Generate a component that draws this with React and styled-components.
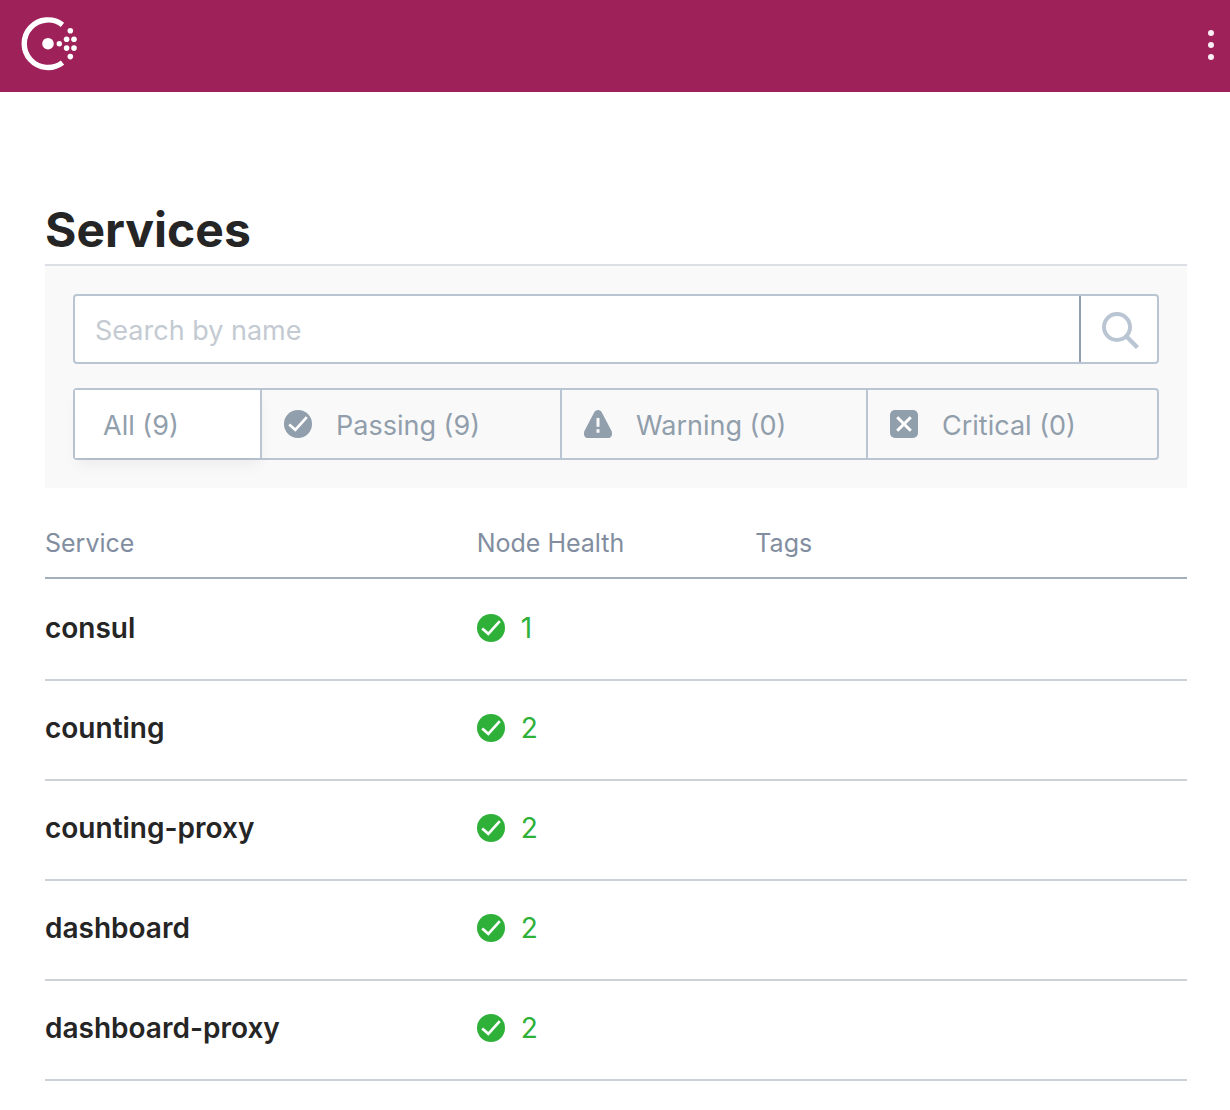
import React, { useState } from "react";
import styled, { createGlobalStyle } from "styled-components";

const GlobalStyle = createGlobalStyle`
  *, *::before, *::after { box-sizing: border-box; }
  body {
    margin: 0;
    background: #fff;
    color: #252525;
    font-family: Inter, "Liberation Sans", sans-serif;
    font-size: 28px;
    line-height: 36px;
  }
`;

const Header = styled.header`
  display: flex;
  align-items: center;
  justify-content: space-between;
  height: 92px;
  padding: 0 8px 0 20px;
  background: #9e2159;
`;

const HomeLink = styled.a`
  display: flex;
  padding-bottom: 4px;
`;

const MenuButton = styled.button`
  display: flex;
  padding: 0;
  border: 0;
  background: none;
  cursor: pointer;
`;

const Main = styled.main`
  padding: 108px 43px 0 45px;
`;

const Title = styled.h1`
  margin: 0;
  padding-bottom: 4px;
  border-bottom: 2px solid #dce0e6;
  font-size: 48px;
  line-height: 60px;
  font-weight: 700;
`;

const FilterBar = styled.form`
  display: flex;
  flex-direction: column;
  gap: 24px;
  padding: 28px;
  background: #f9f9f9;
  font-size: 27px;
`;

const SearchBox = styled.div`
  display: flex;
  height: 70px;
  border: 2px solid #bac5d3;
  border-radius: 4px;
  background: #fff;
`;

const SearchInput = styled.input`
  flex: 1;
  min-width: 0;
  padding: 4px 20px 0;
  border: 0;
  outline: 0;
  background: none;
  color: #252525;
  font: inherit;
  &::placeholder { color: #c4cad2; opacity: 1; }
`;

const SearchButton = styled.button`
  display: flex;
  align-items: center;
  justify-content: center;
  width: 78px;
  padding: 0;
  border: 0;
  border-left: 2px solid #919eae;
  background: none;
  cursor: pointer;
`;

const Filters = styled.div`
  display: grid;
  grid-template-columns: 187fr 300fr 306fr 289fr;
  height: 72px;
  border: 2px solid #bac5d3;
  border-radius: 4px;
`;

const FilterLabel = styled.label`
  display: flex;
  align-items: center;
  gap: 24px;
  padding-left: ${(p) => (p.$plain ? 28 : 22)}px;
  border-right: 2px solid #bac5d3;
  color: #919eac;
  white-space: nowrap;
  cursor: pointer;
  background: ${(p) => (p.$active ? "#fff" : "transparent")};
  box-shadow: ${(p) => (p.$active ? "0 8px 14px -2px rgba(0, 0, 0, 0.06)" : "none")};
  &:last-child { border-right: 0; }
`;

const FilterRadio = styled.input`
  position: absolute;
  width: 1px;
  height: 1px;
  margin: 0;
  opacity: 0;
`;

const FilterText = styled.span`
  padding-top: 4px;
`;

const ServiceTable = styled.table`
  width: 100%;
  margin-top: 18px;
  border-collapse: separate;
  border-spacing: 0;
  table-layout: fixed;
`;

const HeadCell = styled.th`
  width: ${(p) => p.$width || "auto"};
  height: 73px;
  padding: 2px 0 0;
  border-bottom: 2px solid #a3afbb;
  color: #828e9f;
  font-size: 25px;
  font-weight: 400;
  text-align: left;
`;

const Cell = styled.td`
  padding: 0 0 4px;
  border-bottom: 2px solid #cbd1d6;
`;

const Row = styled.tr`
  height: 100px;
  &:first-child { height: 102px; }
  &:first-child ${Cell} { border-top: 2px solid transparent; }
`;

const ServiceLink = styled.a`
  color: #252525;
  font-weight: 600;
  text-decoration: none;
`;

const Health = styled.span`
  display: flex;
  align-items: center;
  gap: 16px;
  color: #2eb039;
`;

function Logo() {
  return (
    <svg width="60" height="56" viewBox="0 0 60 56" fill="#fff" aria-hidden="true">
      <path d="M42.5 8.8A23.8 23.8 0 1 0 42.5 46.6" fill="none" stroke="#fff" strokeWidth="5.4" />
      <circle cx="28" cy="27.7" r="5.8" />
      <circle cx="39.3" cy="27.7" r="2.7" />
      <circle cx="46.6" cy="23.3" r="2.8" />
      <circle cx="54" cy="23.3" r="2.8" />
      <circle cx="46.6" cy="32.1" r="2.8" />
      <circle cx="54" cy="32.1" r="2.8" />
      <circle cx="50.3" cy="14.8" r="2.8" />
      <circle cx="50.3" cy="40.6" r="2.8" />
    </svg>
  );
}

function CheckIcon() {
  return (
    <svg width="28" height="28" viewBox="0 0 28 28" aria-hidden="true">
      <circle cx="14" cy="14" r="14" fill="currentColor" />
      <path d="M5.2 14.4L11.3 19.8L22.8 7.2" fill="none" stroke="#fff" strokeWidth="2.7" />
    </svg>
  );
}

function WarningIcon() {
  return (
    <svg width="28" height="28" viewBox="0 0 28 28" aria-hidden="true">
      <path
        d="M10.4 2.1C12 -0.7 16 -0.7 17.6 2.1L27.3 20.6C29.2 24.4 27.5 28 23.8 28H4.2C0.5 28 -1.2 24.4 0.7 20.6Z"
        fill="currentColor"
      />
      <path d="M12.5 8H15.5V16.8H12.5ZM12.5 19.2H15.5V22.8H12.5Z" fill="#f9f9f9" />
    </svg>
  );
}

function CriticalIcon() {
  return (
    <svg width="28" height="28" viewBox="0 0 28 28" aria-hidden="true">
      <rect width="28" height="28" rx="5" fill="currentColor" />
      <path d="M7.2 7.2L20.8 20.8M20.8 7.2L7.2 20.8" stroke="#fff" strokeWidth="3" />
    </svg>
  );
}

const filters = [
  { id: "all", label: "All (9)" },
  { id: "passing", label: "Passing (9)", Icon: CheckIcon },
  { id: "warning", label: "Warning (0)", Icon: WarningIcon },
  { id: "critical", label: "Critical (0)", Icon: CriticalIcon },
];

const services = [
  { name: "consul", passing: 1 },
  { name: "counting", passing: 2 },
  { name: "counting-proxy", passing: 2 },
  { name: "dashboard", passing: 2 },
  { name: "dashboard-proxy", passing: 2 },
];

export default function App() {
  const [status, setStatus] = useState("all");
  return (
    <>
      <GlobalStyle />
      <Header>
        <HomeLink href="#" aria-label="Consul">
          <Logo />
        </HomeLink>
        <MenuButton type="button" aria-label="Menu">
          <svg width="22" height="36" viewBox="0 0 22 36" fill="#f8eef3" aria-hidden="true">
            <circle cx="11" cy="5" r="3" />
            <circle cx="11" cy="17" r="3" />
            <circle cx="11" cy="29" r="3" />
          </svg>
        </MenuButton>
      </Header>
      <Main>
        <Title>Services</Title>
        <FilterBar onSubmit={(e) => e.preventDefault()}>
          <SearchBox>
            <SearchInput type="text" aria-label="Search by name" placeholder="Search by name" />
            <SearchButton type="submit" aria-label="Search">
              <svg width="40" height="40" viewBox="0 0 40 40" fill="none" stroke="#bac5d3" strokeWidth="4" aria-hidden="true">
                <circle cx="18" cy="18" r="13" />
                <path d="M27 27L38.5 38.5" strokeWidth="4.4" />
              </svg>
            </SearchButton>
          </SearchBox>
          <Filters role="radiogroup" aria-label="Health status">
            {filters.map(({ id, label, Icon }) => (
              <FilterLabel key={id} $active={status === id} $plain={!Icon}>
                <FilterRadio
                  type="radio"
                  name="status"
                  checked={status === id}
                  onChange={() => setStatus(id)}
                />
                {Icon && <Icon />}
                <FilterText>{label}</FilterText>
              </FilterLabel>
            ))}
          </Filters>
        </FilterBar>
        <ServiceTable>
          <thead>
            <tr>
              <HeadCell $width="37.8%">Service</HeadCell>
              <HeadCell $width="24.4%">Node Health</HeadCell>
              <HeadCell>Tags</HeadCell>
            </tr>
          </thead>
          <tbody>
            {services.map(({ name, passing }) => (
              <Row key={name}>
                <Cell>
                  <ServiceLink href={`#${name}`}>{name}</ServiceLink>
                </Cell>
                <Cell>
                  <Health>
                    <CheckIcon />
                    {passing}
                  </Health>
                </Cell>
                <Cell />
              </Row>
            ))}
          </tbody>
        </ServiceTable>
      </Main>
    </>
  );
}
